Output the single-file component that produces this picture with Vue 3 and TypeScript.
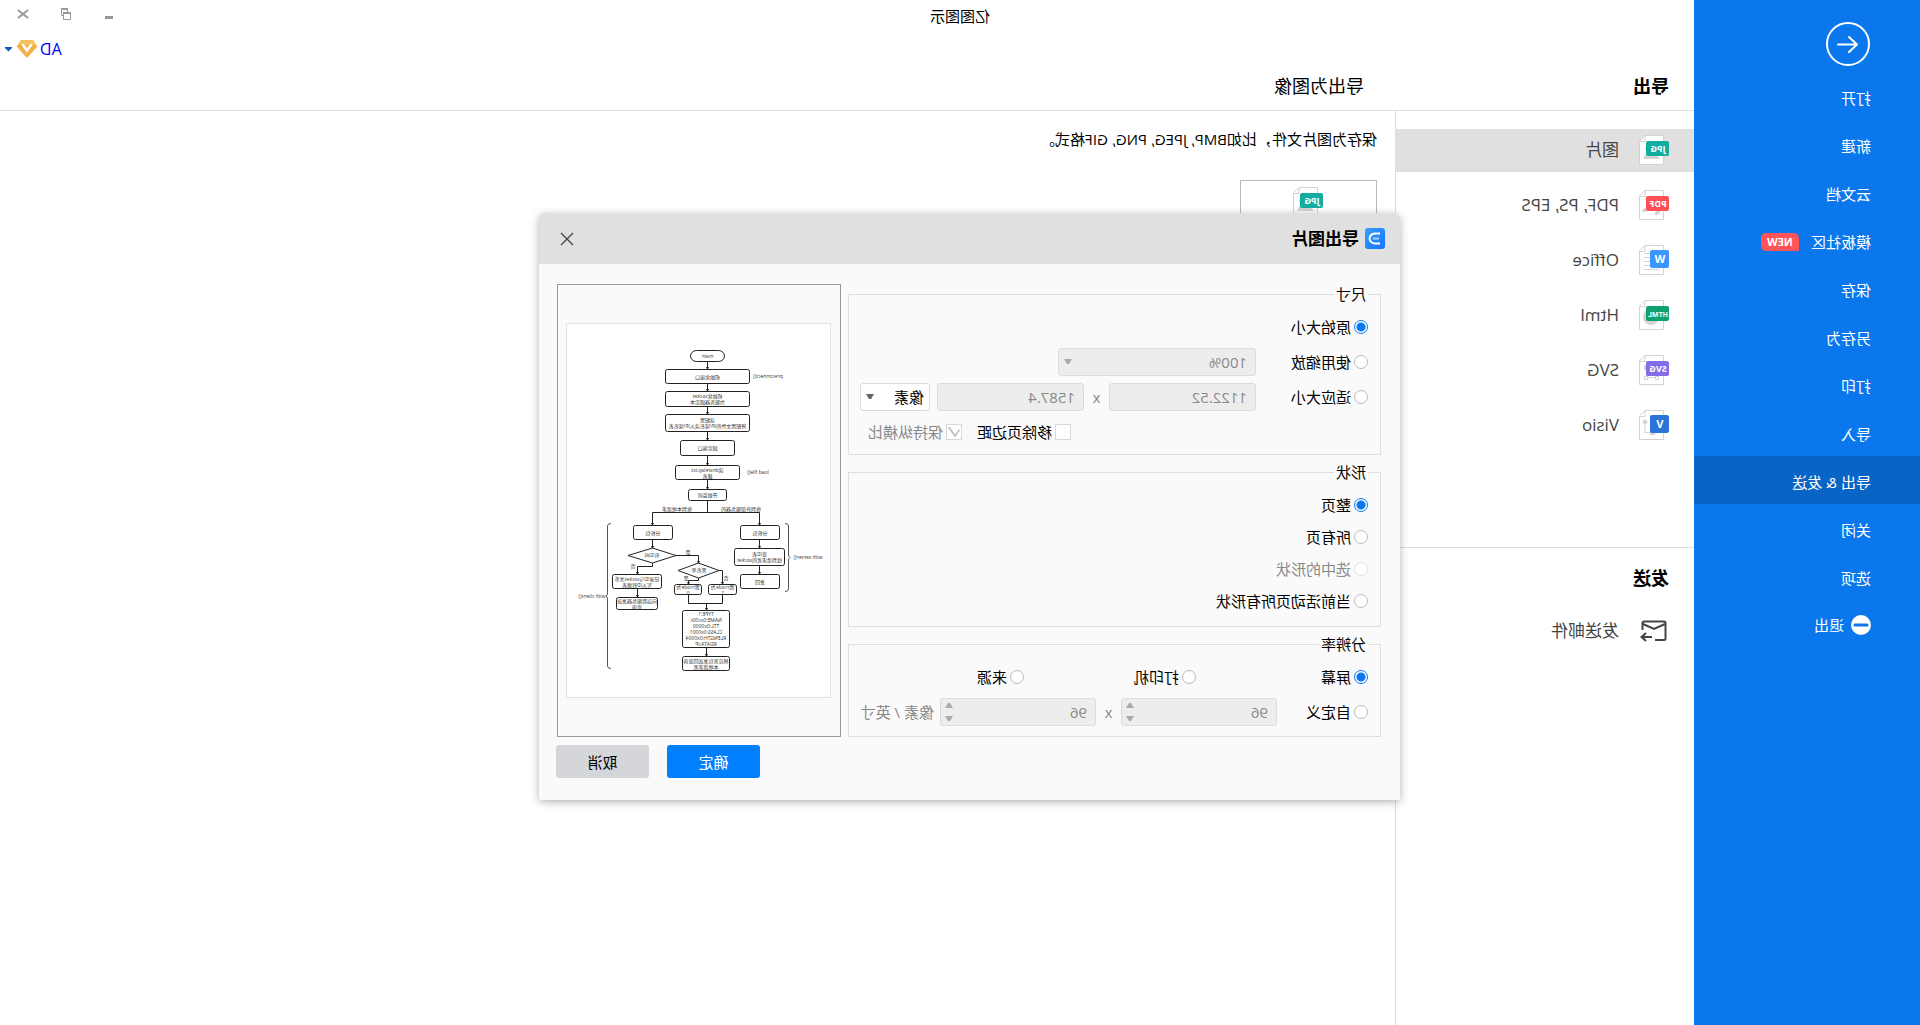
<script setup lang="ts">
import { ref } from 'vue'

interface MenuItem {
  label: string
  badge?: string
}

interface ExportFormat {
  label: string
  tag: string
  color: string
  kind: 'image' | 'pdf' | 'lines' | 'globe' | 'vector' | 'nodes'
  small?: boolean
}

interface FlowNode {
  x: number
  y: number
  w: number
  h: number
  r?: number
  lines: string[]
}

interface FlowLabel {
  x: number
  y: number
  text: string
}

const menu: MenuItem[] = [
  { label: '打开' },
  { label: '新建' },
  { label: '云文档' },
  { label: '模板社区', badge: 'NEW' },
  { label: '保存' },
  { label: '另存为' },
  { label: '打印' },
  { label: '导入' },
  { label: '导出 & 发送' },
  { label: '关闭' },
  { label: '选项' },
]
const activeMenu = ref(8)

const formats: ExportFormat[] = [
  { label: '图片', tag: 'JPG', color: '#12ada0', kind: 'image' },
  { label: 'PDF, PS, EPS', tag: 'PDF', color: '#ff4f56', kind: 'pdf' },
  { label: 'Office', tag: 'W', color: '#3b97ff', kind: 'lines', small: true },
  { label: 'Html', tag: 'HTML', color: '#109f70', kind: 'globe' },
  { label: 'SVG', tag: 'SVG', color: '#846ce6', kind: 'vector' },
  { label: 'Visio', tag: 'V', color: '#2a74da', kind: 'nodes', small: true },
]
const activeFormat = ref(0)

const sizeMode = ref('original')
const shapeMode = ref('page')
const resolution = ref('screen')
const removeMargin = ref(false)
const unit = ref('像素')

const shapeOptions = [
  { value: 'page', label: '整页', disabled: false },
  { value: 'all', label: '所有页', disabled: false },
  { value: 'selected', label: '选中的形状', disabled: true },
  { value: 'active', label: '当前活动页所有形状', disabled: false },
]

const resolutionOptions = [
  { value: 'screen', label: '屏幕' },
  { value: 'printer', label: '打印机' },
  { value: 'source', label: '来源' },
]

const nodes: FlowNode[] = [
  { x: 106, y: 27, w: 35, h: 12, r: 6, lines: ['main'] },
  { x: 81, y: 46, w: 85, h: 15, lines: ['初始化接口'] },
  { x: 81, y: 68, w: 85, h: 16, lines: ['初始化socket', '为服务器绑定本'] },
  { x: 81, y: 91, w: 85, h: 18, lines: ['读配置', '将配置文件的IP/域名读入IP/域名表'] },
  { x: 96, y: 117, w: 55, h: 16, lines: ['绑定端口'] },
  { x: 91, y: 142, w: 65, h: 15, lines: ['读dnsrelay.txt', '建表'] },
  { x: 104, y: 166, w: 39, h: 12, lines: ['开始监听'] },
  { x: 51, y: 202, w: 40, h: 15, lines: ['分析包'] },
  { x: 46, y: 225, w: 51, h: 18, lines: ['查ID表', '找到请求者的socket'] },
  { x: 51, y: 251, w: 40, h: 15, lines: ['发回'] },
  { x: 158, y: 202, w: 40, h: 15, lines: ['分析包'] },
  { x: 169, y: 251, w: 50, h: 15, lines: ['记录ID与socket关系', '写入ID转换表'] },
  { x: 173, y: 274, w: 42, h: 13, lines: ['向远程服务器发送', '查询'] },
  { x: 94, y: 261, w: 29, h: 11, lines: ['置rcode为', '1'] },
  { x: 129, y: 261, w: 28, h: 11, lines: ['置rcode为', '0'] },
  {
    x: 101, y: 287, w: 48, h: 38,
    lines: ['TYPE:1', 'NAME:0xc00c', 'TTL:0x0000', 'CLASS:0x0001', 'RLENGTH:0x0004', 'RDATA:IP'],
  },
  { x: 101, y: 333, w: 48, h: 15, lines: ['将应答包发送回查询', '本地请求者'] },
]

const labels: FlowLabel[] = [
  { x: 63, y: 53, text: 'preconnect()' },
  { x: 73, y: 149, text: 'load file()' },
  { x: 90, y: 186, text: '收到外部服务器的' },
  { x: 154, y: 186, text: '收到本地请求' },
  { x: 23, y: 234, text: 'with server()' },
  { x: 239, y: 273, text: 'with client()' },
  { x: 179, y: 232, text: '有ID吗' },
  { x: 132, y: 247, text: '黑名单' },
  { x: 143, y: 229, text: '是' },
  { x: 198, y: 243, text: '否' },
  { x: 145, y: 255, text: '是' },
  { x: 105, y: 255, text: '否' },
]

const connectors =
  'M123.5 39V46M123.5 61V68M123.5 84V91M123.5 109V117M123.5 133V142M123.5 157V166M123.5 178V189.5' +
  'M71.5 202V189.5H178.5V202M71.5 217V225M71.5 243V251M178.5 217V225M155 232.5H132.5V240' +
  'M178.5 240V243.5H193.5V251M193.5 266V274M132.5 255V257.5H142.5V261M112 247.5H108.5V261' +
  'M108.5 272V280.5H142.5V272M124.5 280.5V287M124.5 325V333'

const arrowHeads = [
  [123.5, 46], [123.5, 68], [123.5, 91], [123.5, 117], [123.5, 142], [123.5, 166], [71.5, 202], [178.5, 202],
  [71.5, 225], [71.5, 251], [178.5, 225], [132.5, 240], [193.5, 251], [193.5, 274], [142.5, 261], [108.5, 261],
  [124.5, 287], [124.5, 333],
]

function lineY(node: FlowNode, index: number): number {
  return node.y + node.h / 2 + (index - (node.lines.length - 1) / 2) * 6
}
</script>

<template>
  <div class="app">
    <aside class="sidebar">
      <button class="back" type="button" aria-label="返回">
        <svg width="44" height="44" viewBox="0 0 44 44" fill="none" stroke="#fff" stroke-width="2">
          <circle cx="22" cy="22" r="21" />
          <path d="M32 22.500H13M21 15L13 22.500L21 30" stroke-linecap="round" stroke-linejoin="round" />
        </svg>
      </button>
      <nav class="menu">
        <button
          v-for="(item, i) in menu"
          :key="item.label"
          type="button"
          class="menu-item"
          :class="{ active: i === activeMenu }"
          @click="activeMenu = i"
        >
          <span>{{ item.label }}</span>
          <span v-if="item.badge" class="new">{{ item.badge }}</span>
        </button>
        <button type="button" class="menu-item exit">
          <svg width="20" height="20" viewBox="0 0 20 20">
            <circle cx="10" cy="10" r="10" fill="#fff" />
            <path d="M4 10H16" stroke="#0a78ec" stroke-width="3" stroke-linecap="round" />
          </svg>
          <span>退出</span>
        </button>
      </nav>
    </aside>

    <main class="main">
      <header class="header">
        <div class="titlebar">
          <div class="app-title">亿图图示</div>
          <div class="controls">
            <button type="button" aria-label="最小化">
              <svg width="12" height="12" viewBox="0 0 12 12"><path d="M2 9.500H10" stroke="#999" stroke-width="3" /></svg>
            </button>
            <button type="button" aria-label="还原">
              <svg width="12" height="12" viewBox="0 0 12 12" fill="none" stroke="#999">
                <path d="M4.500 0V7.500H10.500V0" />
                <path d="M4 1H11" stroke-width="2" />
                <path d="M1.500 4V11.500H8.500V4" fill="#fff" />
                <path d="M1 5H9" stroke-width="2" />
              </svg>
            </button>
            <button type="button" aria-label="关闭">
              <svg width="12" height="12" viewBox="0 0 12 12"><path d="M1 2L11 10M11 2L1 10" stroke="#999" stroke-width="2" /></svg>
            </button>
          </div>
        </div>
        <div class="account">
          <a href="#">AD</a>
          <svg width="20" height="18" viewBox="0 0 20 18">
            <path d="M4 0H16L20 6Q20 7 19 8L11 17Q10 18 9 17L1 8Q0 7 0 6Z" fill="#f1b04a" />
            <path d="M4 0H16L19 5H1Z" fill="#f8c25c" />
            <path d="M6 5L10 10.500L14 5" fill="none" stroke="#fff" stroke-width="2.500" stroke-linecap="round" />
          </svg>
          <svg width="7" height="5" viewBox="0 0 7 5"><path d="M0 0H7V1L3.500 4.500L0 1Z" fill="#0b5cb8" /></svg>
        </div>
        <div class="headings">
          <h2>导出</h2>
          <h1>导出为图像</h1>
        </div>
      </header>

      <div class="columns">
        <nav class="formats">
          <div class="format-list">
            <button
              v-for="(f, i) in formats"
              :key="f.label"
              type="button"
              class="format"
              :class="{ active: i === activeFormat }"
              @click="activeFormat = i"
            >
              <svg width="30" height="30" viewBox="0 0 30 30">
                <path d="M5.500 0.500H24L29.500 6V29.500H5.500Z" fill="#fff" stroke="#d3d3d3" />
                <path d="M24 0.500V6.500H29.500" fill="none" stroke="#d3d3d3" />
                <g fill="#d3d3d3" stroke="none">
                  <path v-if="f.kind === 'image'" d="M9 24L16 15L19 19L22 16L26 24ZM22 12A2 2 0 1 1 22 16Z" />
                  <path
                    v-else-if="f.kind === 'pdf'"
                    d="M8 21Q9 19 12 20L14 23Q14 26 12 25Q9 23 8 21ZM20 19Q23 17 26 19Q28 21 25 22Q22 22 20 20Z"
                  />
                  <path v-else-if="f.kind === 'lines'" d="M10 8H25V9H10ZM10 12H25V13H10ZM10 16H25V17H10ZM10 20H25V21H10ZM10 24H25V25H10Z" />
                  <circle v-else-if="f.kind === 'globe'" cx="18" cy="17" r="8" />
                  <path
                    v-else-if="f.kind === 'vector'"
                    d="M10 10H25V15H23V21H25V25H21V23H14V25H10V21H12V12H10ZM14 21V22H21V21ZM22 22V24H24V22ZM11 22V24H13V22Z"
                    fill-rule="evenodd"
                  />
                  <path v-else d="M24 9L27 12L24 15L21 12ZM23.500 14H24.500V23H19V25H14V20H19V22H23.500Z" />
                </g>
                <rect :width="f.small ? 19 : 23" :height="f.small ? 18 : 15" x="0" :y="f.small ? 5 : 6" rx="2" :fill="f.color" />
                <text
                  :x="f.small ? 9 : 11"
                  :y="f.small ? 18 : 17"
                  :font-size="f.small ? 11 : f.tag.length > 3 ? 7 : 9"
                  text-anchor="middle"
                  class="tag"
                >{{ f.tag }}</text>
              </svg>
              <span>{{ f.label }}</span>
            </button>
          </div>
          <div class="send">
            <h2>发送</h2>
            <button type="button" class="format">
              <svg width="30" height="30" viewBox="0 0 30 30" fill="none" stroke="#444" stroke-width="2">
                <path d="M14 24H5Q3.500 24 3.500 22.500V7Q3.500 5.500 5 5.500H25Q26.500 5.500 26.500 7V14" />
                <path d="M4 8L15 13L26 8M17 21H27M23 17L27.500 21L23 25" />
              </svg>
              <span>发送邮件</span>
            </button>
          </div>
        </nav>

        <section class="content">
          <p>保存为图片文件，比如BMP, JPEG, PNG, GIF格式。</p>
          <button type="button" class="card" aria-label="JPG">
            <svg width="30" height="30" viewBox="0 0 30 30">
              <path d="M5.500 0.500H24L29.500 6V29.500H5.500Z" fill="#fff" stroke="#d3d3d3" />
              <path d="M24 0.500V6.500H29.500" fill="none" stroke="#d3d3d3" />
              <path d="M9 24L16 15L19 19L22 16L26 24ZM22 12A2 2 0 1 1 22 16Z" fill="#d3d3d3" />
              <rect width="23" height="15" x="0" y="6" rx="2" fill="#12ada0" />
              <text x="11" y="17" font-size="9" text-anchor="middle" class="tag">JPG</text>
            </svg>
          </button>
        </section>
      </div>
    </main>

    <form class="dialog" role="dialog" aria-labelledby="dialog-title" @submit.prevent>
      <header class="dialog-head">
        <svg width="20" height="21" viewBox="0 0 20 21">
          <defs>
            <linearGradient id="logo" x1="0" y1="1" x2="1" y2="0">
              <stop offset="0" stop-color="#1673fb" />
              <stop offset="1" stop-color="#35a0ff" />
            </linearGradient>
          </defs>
          <rect width="20" height="21" rx="3" fill="url(#logo)" />
          <path d="M5 5.500H10Q15 6 15.500 10.500Q15 15 10 15.500H5" fill="none" stroke="#fff" stroke-width="2" />
          <path d="M6 10.500H12" stroke="#a9d3ff" stroke-width="2" />
        </svg>
        <h2 id="dialog-title">导出图片</h2>
        <button type="button" class="close" aria-label="关闭">
          <svg width="14" height="14" viewBox="0 0 14 14"><path d="M1 1L13 13M13 1L1 13" stroke="#444" stroke-width="1.300" /></svg>
        </button>
      </header>

      <div class="dialog-body">
        <div class="options">
          <fieldset>
            <legend>尺寸</legend>
            <div class="row">
              <label class="choice"><input v-model="sizeMode" type="radio" name="size" value="original" />原始大小</label>
            </div>
            <div class="row">
              <label class="choice wide"><input v-model="sizeMode" type="radio" name="size" value="scale" />使用缩放</label>
              <span class="select scale">
                <select disabled aria-label="缩放比例"><option>100%</option></select>
                <svg width="8" height="5" viewBox="0 0 8 5"><path d="M0 0H8L5 5H3Z" fill="#aaa" /></svg>
              </span>
            </div>
            <div class="row">
              <label class="choice wide"><input v-model="sizeMode" type="radio" name="size" value="fit" />适应大小</label>
              <input class="field" type="text" value="1122.52" disabled aria-label="宽度" />
              <span class="times">x</span>
              <input class="field" type="text" value="1587.4" disabled aria-label="高度" />
              <span class="select unit">
                <select v-model="unit" aria-label="单位"><option>像素</option></select>
                <svg width="8" height="5" viewBox="0 0 8 5"><path d="M0 0H8L5 5H3Z" fill="#666" /></svg>
              </span>
            </div>
            <div class="row checks">
              <label class="choice"><input v-model="removeMargin" type="checkbox" />移除页边距</label>
              <label class="choice off"><input type="checkbox" checked disabled />保持纵横比</label>
            </div>
          </fieldset>

          <fieldset class="shapes">
            <legend>形状</legend>
            <div v-for="s in shapeOptions" :key="s.value" class="row">
              <label class="choice" :class="{ off: s.disabled }">
                <input v-model="shapeMode" type="radio" name="shape" :value="s.value" :disabled="s.disabled" />{{ s.label }}
              </label>
            </div>
          </fieldset>

          <fieldset class="resolution">
            <legend>分辨率</legend>
            <div class="row thirds">
              <label v-for="r in resolutionOptions" :key="r.value" class="choice">
                <input v-model="resolution" type="radio" name="resolution" :value="r.value" />{{ r.label }}
              </label>
            </div>
            <div class="row">
              <label class="choice medium"><input v-model="resolution" type="radio" name="resolution" value="custom" />自定义</label>
              <span class="spin">
                <input type="number" value="96" disabled aria-label="水平分辨率" />
                <svg width="8" height="18" viewBox="0 0 8 18"><path d="M0 5L3 0H5L8 5ZM0 13H8L5 18H3Z" fill="#aaa" /></svg>
              </span>
              <span class="times">x</span>
              <span class="spin">
                <input type="number" value="96" disabled aria-label="垂直分辨率" />
                <svg width="8" height="18" viewBox="0 0 8 18"><path d="M0 5L3 0H5L8 5ZM0 13H8L5 18H3Z" fill="#aaa" /></svg>
              </span>
              <span class="per">像素 / 英寸</span>
            </div>
          </fieldset>
        </div>

        <div class="preview">
          <svg class="sheet" viewBox="0 0 265 375" width="265" height="375">
            <rect x="0.500" y="0.500" width="264" height="374" fill="#fff" stroke="#e3e3e3" />
            <g fill="none" stroke="#222">
              <path :d="connectors" />
              <rect
                v-for="(n, i) in nodes"
                :key="i"
                :x="n.x + 0.5"
                :y="n.y + 0.5"
                :width="n.w - 1"
                :height="n.h - 1"
                :rx="n.r ?? 2"
              />
              <path d="M155 232.500L178.500 225L203 232.500L178.500 240ZM112 247.500L132.500 240L153 247.500L132.500 255Z" />
              <path
                d="M46 200.500Q42.500 200.500 42.500 203V231Q42.500 234 41 234.500Q42.500 235 42.500 238V266Q42.500 268.500 46 268.500M220 200.500Q223.500 200.500 223.500 203V270Q223.500 272.500 225 273Q223.500 273.500 223.500 276V343Q223.500 345.500 220 345.500"
                stroke="#555"
              />
            </g>
            <path v-for="(a, i) in arrowHeads" :key="i" :d="`M${a[0] - 1.5} ${a[1] - 2}h3l-1.500 3z`" fill="#222" />
            <g class="flow-text">
              <template v-for="(n, i) in nodes" :key="i">
                <text v-for="(t, j) in n.lines" :key="j" :x="n.x + n.w / 2" :y="lineY(n, j) + 2">{{ t }}</text>
              </template>
              <text v-for="(l, i) in labels" :key="'l' + i" :x="l.x" :y="l.y + 2">{{ l.text }}</text>
            </g>
          </svg>
        </div>
      </div>

      <footer class="actions">
        <button type="submit" class="ok">确定</button>
        <button type="button" class="cancel">取消</button>
      </footer>
    </form>
  </div>
</template>

<style>
body {
  margin: 0;
  background: #fff;
}
</style>

<style scoped>
.app {
  position: relative;
  display: flex;
  min-height: 100vh;
  overflow: hidden;
  background: #fff;
  color: #000;
  font: 15px/20px 'Open Sans', 'Noto Sans CJK SC', sans-serif;
  transform: scaleX(-1);
}

.app *,
.app *::before {
  box-sizing: border-box;
}

button,
input,
select {
  margin: 0;
  padding: 0;
  border: 0;
  background: none;
  color: inherit;
  font: inherit;
}

svg {
  display: block;
  flex: none;
}

h1,
h2,
p {
  margin: 0;
}

h1 {
  font-size: 18px;
  font-weight: 400;
}

h2 {
  font-size: 18px;
  font-weight: 700;
}

/* sidebar */
.sidebar {
  flex: none;
  width: 226px;
  padding-top: 22px;
  background: #0a78ec;
  color: #fff;
}

.back {
  display: block;
  margin: 0 0 6px 50px;
}

.menu-item {
  display: flex;
  align-items: center;
  gap: 12px;
  width: 100%;
  height: 48px;
  padding: 4px 0 0 49px;
  text-align: left;
}

.menu-item.active {
  background: #0865c6;
}

.menu-item.exit {
  gap: 7px;
  padding-top: 2px;
}

.new {
  width: 38px;
  height: 18px;
  border-radius: 5px 5px 5px 0;
  background: #ff5458;
  font-size: 11px;
  font-weight: 700;
  line-height: 18px;
  text-align: center;
}

/* header */
.main {
  display: flex;
  flex: 1;
  flex-direction: column;
}

.header {
  border-bottom: 1px solid #dedede;
}

.titlebar {
  display: flex;
  height: 28px;
}

.app-title {
  flex: 1;
  line-height: 32px;
  text-align: center;
}

.controls {
  display: flex;
  justify-content: flex-end;
  width: 226px;
  padding-right: 2px;
}

.controls button {
  display: grid;
  place-items: center;
  width: 43px;
}

.account {
  display: flex;
  align-items: center;
  justify-content: flex-end;
  height: 42px;
  padding-right: 5px;
}

.account a {
  margin-right: 3px;
  color: #00f;
  font-size: 16px;
  text-decoration: none;
}

.account svg + svg {
  margin-left: 5px;
}

.headings {
  display: flex;
  height: 40px;
  line-height: 32px;
}

.headings h2 {
  width: 330px;
  padding-left: 25px;
}

/* columns */
.columns {
  display: flex;
  flex: 1;
}

.formats {
  flex: none;
  width: 299px;
  border-right: 1px solid #dedede;
  color: #444;
  font-size: 17px;
}

.format-list {
  display: flex;
  flex-direction: column;
  gap: 12px;
  padding: 18px 0 100px;
}

.format {
  display: flex;
  align-items: center;
  gap: 20px;
  width: 100%;
  height: 43px;
  padding: 0 0 2px 25px;
  text-align: left;
}

.format.active {
  background: #e0e0e0;
}

.send {
  border-top: 1px solid #dedede;
}

.send h2 {
  padding: 18px 0 20px 25px;
  color: #000;
  line-height: 24px;
}

.tag {
  fill: #fff;
  font-family: 'Open Sans', sans-serif;
  font-weight: 700;
}

.content {
  flex: 1;
  padding: 18px;
}

.card {
  display: flex;
  justify-content: center;
  width: 137px;
  height: 100px;
  margin-top: 31px;
  padding-top: 6px;
  border: 1px solid #b8b8b8;
}

/* dialog */
.dialog {
  position: absolute;
  top: 213px;
  left: 520px;
  width: 861px;
  border-radius: 6px 6px 2px 2px;
  background: #fafafa;
  box-shadow: 0 2px 8px rgba(0, 0, 0, 0.3);
}

.dialog-head {
  display: flex;
  align-items: center;
  height: 51px;
  padding: 0 21px 0 15px;
  border-radius: 6px 6px 0 0;
  background: #e0e0e0;
}

.dialog-head h2 {
  margin-left: 6px;
  font-size: 17px;
}

.close {
  margin-left: auto;
}

.dialog-body {
  display: flex;
  gap: 7px;
  padding: 20px 18px 0 19px;
}

.options {
  display: flex;
  flex: 1;
  flex-direction: column;
  gap: 7px;
  min-width: 0;
}

fieldset {
  display: flex;
  flex-direction: column;
  gap: 7px;
  min-width: 0;
  margin: 0;
  padding: 9px 11px 8px 12px;
  border: 1px solid #dedede;
}

.shapes {
  gap: 4px;
  padding-bottom: 11px;
}

.resolution {
  padding-bottom: 10px;
}

legend {
  padding: 0 2px;
}

.row {
  display: flex;
  align-items: center;
  height: 28px;
}

.choice {
  display: flex;
  align-items: center;
  gap: 3px;
}

.wide {
  width: 112px;
}

.medium {
  width: 91px;
}

.thirds {
  display: grid;
  grid-template-columns: 172px 172px 1fr;
}

.checks {
  justify-content: flex-end;
  gap: 15px;
  padding-right: 8px;
}

.off {
  color: #888;
}

input[type='radio'],
input[type='checkbox'] {
  flex: none;
  width: 14px;
  height: 14px;
  border: 1px solid #bbb;
  border-radius: 50%;
  background: #fff;
  appearance: none;
}

input[type='radio']:checked {
  border-color: #0a78ec;
  background: radial-gradient(circle, #0a78ec 0 4px, #fff 5px);
}

input[type='radio']:disabled {
  border-color: #e0e0e0;
}

input[type='checkbox'] {
  display: grid;
  place-items: center;
  width: 16px;
  height: 16px;
  border-color: #d8d8d8;
  border-radius: 0;
}

input[type='checkbox']:checked::before {
  content: '';
  width: 12px;
  height: 11px;
  background: #bbb;
  clip-path: polygon(0 35%, 12% 25%, 40% 75%, 88% 0, 100% 8%, 42% 100%);
}

.field,
select,
.spin input {
  width: 147px;
  height: 28px;
  padding: 0 8px;
  border: 1px solid #dcdcdc;
  border-radius: 3px;
  background: #ededed;
  color: #888;
  opacity: 1;
  appearance: none;
}

.select,
.spin {
  position: relative;
}

.select svg,
.spin svg {
  position: absolute;
  top: 11px;
  right: 6px;
}

.spin svg {
  top: 5px;
  right: 5px;
}

.spin input {
  width: 156px;
  appearance: textfield;
}

.scale select {
  width: 198px;
}

.unit {
  margin-left: 7px;
}

.unit select {
  width: 70px;
  padding: 0 5px;
  background: #fff;
  color: #000;
}

.times {
  width: 25px;
  color: #888;
  text-align: center;
}

.per {
  margin-left: 6px;
  color: #888;
  white-space: nowrap;
}

.preview {
  display: flex;
  flex: none;
  justify-content: center;
  align-items: center;
  width: 284px;
  border: 1px solid #999;
}

.flow-text {
  fill: #333;
  font-size: 5px;
  text-anchor: middle;
}

.actions {
  display: flex;
  justify-content: flex-end;
  gap: 18px;
  padding: 8px 17px 22px;
}

.actions button {
  width: 93px;
  height: 33px;
  border-radius: 3px;
}

.ok {
  background: #0080ff;
  color: #fff;
}

.cancel {
  background: #d4d6da;
}
</style>
